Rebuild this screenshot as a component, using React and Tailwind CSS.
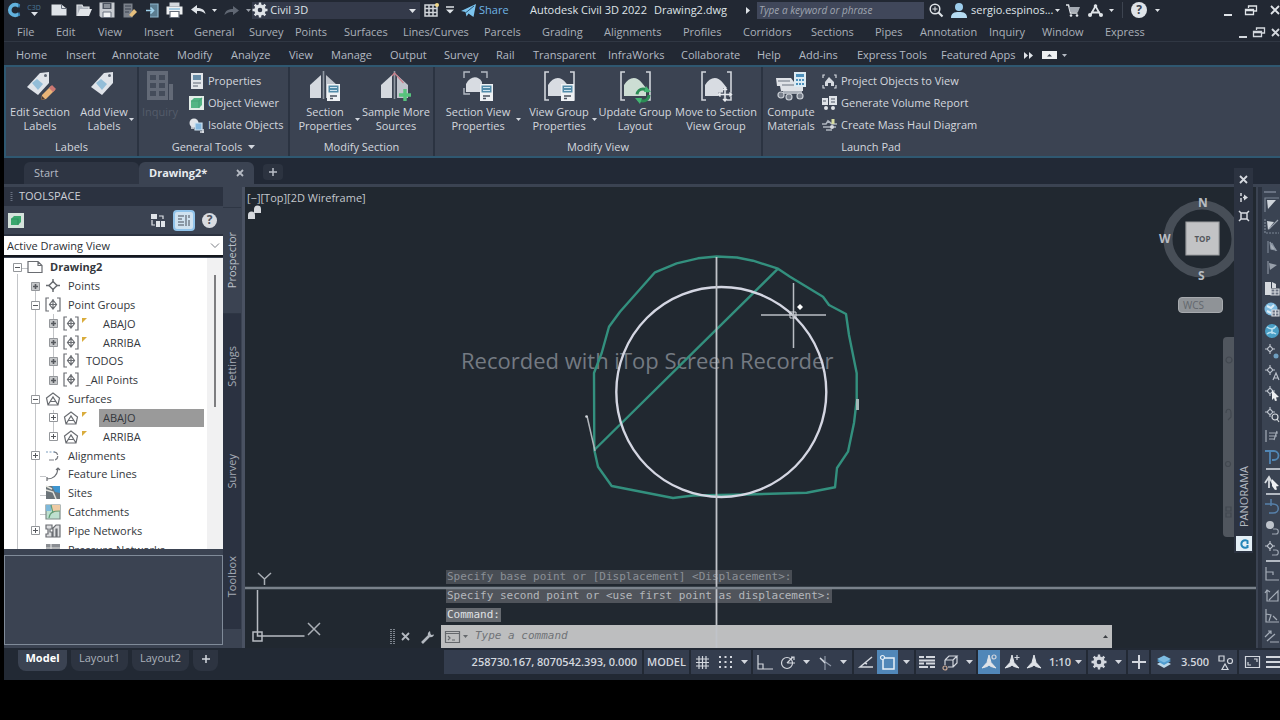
import React from 'react';

function Ic({ w = 16, h = 16, children, className = '' }) {
  return (
    <svg width={w} height={h} viewBox={`0 0 ${w} ${h}`} className={`block shrink-0 overflow-visible ${className}`} fill="none" stroke="currentColor" strokeWidth="1.2" aria-hidden="true">
      {children}
    </svg>
  );
}

const Caret = ({ className = '' }) => (
  <Ic w={7} h={4} className={className}><path d="M0 0h7L3.5 4z" fill="currentColor" stroke="none" /></Ic>
);

const SmallCaret = ({ className = '' }) => (
  <Ic w={5} h={3} className={className}><path d="M0 0h5L2.5 3z" fill="currentColor" stroke="none" /></Ic>
);

const Gear = () => (
  <Ic w={16} h={16}>
    <circle cx="8" cy="8" r="4" strokeWidth="3.4" />
    <path d="M8 0.5v3M8 12.5v3M0.5 8h3M12.5 8h3M2.7 2.7l2.1 2.1M11.2 11.2l2.1 2.1M2.7 13.3l2.1-2.1M11.2 4.8l2.1-2.1" strokeWidth="2.4" />
  </Ic>
);

const Restore = () => (
  <Ic w={12} h={11}><path d="M3.5 3V1h8v5H9M.5 4.5h8v5h-8zM.5 5.5h8" strokeWidth="1.3" /></Ic>
);

const Minimize = () => (
  <Ic w={8} h={11}><path d="M0 10h8" strokeWidth="2" /></Ic>
);

const Close = ({ s = 10 }) => (
  <Ic w={s} h={s}><path d={`M1 1L${s - 1} ${s - 1}M${s - 1} 1L1 ${s - 1}`} strokeWidth="1.8" /></Ic>
);

function TitleButton({ label, width, children }) {
  return (
    <button aria-label={label} className={`flex h-5 shrink-0 items-center justify-center ${width}`}>{children}</button>
  );
}

function TitleBar() {
  return (
    <header className="flex h-5 items-center text-[#dfe3e8]">
      <TitleButton label="Application menu" width="w-5">
        <Ic w={14} h={14}><path d="M12 3.200A5.400 5.400 0 1 0 12 10.800" stroke="#62b2de" strokeWidth="3.600" /><path d="M12 1v3.400M12 9.600V13" stroke="#2f79ad" strokeWidth="1.500" /></Ic>
      </TitleButton>
      <TitleButton label="Product" width="w-[20px]">
        <span className="flex flex-col items-center">
          <span className="text-[7px] leading-[8px] text-[#4a7897]">C3D</span>
          <Caret />
        </span>
      </TitleButton>
      <TitleButton label="New" width="w-[29px]">
        <Ic w={16} h={12}><path d="M.5.500h10l5 4v7h-15z" fill="#dfe3e8" stroke="none" /><path d="M10.500 .5v4h5" stroke="#68707e" strokeWidth="1" /></Ic>
      </TitleButton>
      <TitleButton label="Open" width="w-[22px]">
        <Ic w={16} h={13}><path d="M1 12V1h5l1 2h6v2" fill="#aeb4bd" stroke="#e2e5e9" /><path d="M1 12l3-7h12l-3 7z" fill="#e2e5e9" stroke="none" /></Ic>
      </TitleButton>
      <TitleButton label="Save" width="w-[23px]">
        <Ic w={16} h={16}><path d="M.5.500h15v15H2l-1.500-1.500z" fill="#c8ccd2" stroke="none" /><path d="M3.500 1h9v6h-9z" fill="#4d5461" stroke="none" /><path d="M4 10h8v5.500H4z" fill="#f0f2f4" stroke="#68707e" strokeWidth="1" /><path d="M5 3h6M5 5h6" stroke="#c8ccd2" strokeWidth="1" /></Ic>
      </TitleButton>
      <TitleButton label="Save as" width="w-[23px]">
        <Ic w={14} h={15}><path d="M.5.500h9v14h-9z" fill="#7b818b" stroke="none" /><path d="M2 3h6M2 6h6M2 9h4" stroke="#3b4250" /><path d="M6 12l5-6 3 3-5 5z" fill="#e5bf7e" stroke="none" /></Ic>
      </TitleButton>
      <TitleButton label="Export" width="w-[22px]">
        <Ic w={13} h={15}><path d="M4 1h8v13H4" fill="#5b7d91" stroke="#8eb6cd" /><path d="M0 7.500h7M4.500 4.500l3 3-3 3" stroke="#9fd2ec" strokeWidth="1.600" /></Ic>
      </TitleButton>
      <TitleButton label="Print" width="w-[23px]">
        <Ic w={17} h={16}><path d="M3.500 .5h10v4h-10z" fill="#d5d9de" stroke="none" /><path d="M.5 4.500h16v8H.5z" fill="#eef0f2" stroke="none" /><path d="M4 9.500h9v6H4z" fill="#fff" stroke="#646c79" /><path d="M3 7h11" stroke="#78b5d8" /></Ic>
      </TitleButton>
      <TitleButton label="Undo" width="w-[24px]">
        <Ic w={15} h={10}><path d="M0 4.500L6 0v3c4 0 8 1.500 8.500 6C12 6.500 9.500 6 6 6v3z" fill="currentColor" stroke="none" /></Ic>
      </TitleButton>
      <TitleButton label="Undo history" width="w-[9px]"><SmallCaret /></TitleButton>
      <TitleButton label="Redo" width="w-[25px]">
        <Ic w={15} h={9} className="text-[#606773]"><path d="M15 4.500L9 0v3C5 3 1 4.500.5 9 3 6.500 5.500 6 9 6v3z" fill="currentColor" stroke="none" /></Ic>
      </TitleButton>
      <TitleButton label="Redo history" width="w-[8px]"><SmallCaret className="text-[#9aa0aa]" /></TitleButton>
      <div className="relative flex h-[17px] w-[168px] shrink-0 items-center bg-[#343a4a]">
        <span className="flex w-[18px] items-center justify-center"><Gear /></span>
        <select aria-label="Workspace" className="h-[17px] w-full appearance-none bg-transparent pl-[2px] text-[11px] leading-[16px] text-[#dfe3e8] outline-none">
          <option>Civil 3D</option>
        </select>
        <Caret className="pointer-events-none absolute right-1 top-[7px]" />
      </div>
      <TitleButton label="Sheet set" width="w-[22px]">
        <Ic w={15} h={14}><path d="M1 2h12v11H1zM1 5.500h12M1 9.500h12M5 2v11M9 2v11" stroke="#cfd3d8" strokeWidth="1.500" /><circle cx="13" cy="2" r="2" fill="#efd789" stroke="none" /></Ic>
      </TitleButton>
      <TitleButton label="Customize toolbar" width="w-[16px]">
        <Ic w={8} h={8}><path d="M0 1h8" strokeWidth="1.500" /><path d="M0 3.500h8L4 7.500z" fill="currentColor" stroke="none" /></Ic>
      </TitleButton>
      <button className="flex h-5 w-[72px] shrink-0 items-center gap-[3px] pl-[3px] text-[11px] text-[#6fb4e6]">
        <Ic w={15} h={13}><path d="M0 7L15 0l-2.500 13-5-3.500-2 3-1-4.500z" fill="#7cc4ef" stroke="none" /><path d="M5 8.500L13 2" stroke="#2b5674" strokeWidth="1" /></Ic>
        Share
      </button>
      <h1 className="w-[124px] shrink-0 whitespace-nowrap text-[11px]">Autodesk Civil 3D 2022</h1>
      <span className="w-[92px] shrink-0 whitespace-nowrap text-[11px]">Drawing2.dwg</span>
      <Ic w={11} h={7}><path d="M0 0v7l4-3.500z" fill="currentColor" stroke="none" /></Ic>
      <input aria-label="Search help" placeholder="Type a keyword or phrase" className="h-[17px] w-[167px] min-w-0 bg-[#40475a] px-[2px] text-[10px] italic text-white outline-none placeholder:text-[#9fa5b0]" />
      <TitleButton label="Search" width="w-[24px]">
        <Ic w={14} h={14}><circle cx="6" cy="6" r="4.800" strokeWidth="1.500" /><path d="M9.500 9.500L13.500 13.500" strokeWidth="2.200" /><path d="M3.500 6h5M6 3.500v5" strokeWidth="1" /></Ic>
      </TitleButton>
      <TitleButton label="Account" width="w-[22px]">
        <Ic w={16} h={15}><circle cx="8" cy="4" r="4" fill="#9dcdec" stroke="none" /><path d="M0 15c0-5 3-6 8-6s8 1 8 6z" fill="#b6dbf1" stroke="none" /></Ic>
      </TitleButton>
      <button className="flex h-5 w-[91px] shrink-0 items-center gap-[2px] pl-[1px] text-[11px]">sergio.espinos...<SmallCaret /></button>
      <TitleButton label="Store" width="w-[24px]">
        <Ic w={14} h={13}><path d="M0 1h2.500l2 8h7" strokeWidth="1.500" /><path d="M3 3h11l-2 5H4.500z" fill="#a5abb4" stroke="none" /><circle cx="5" cy="11.500" r="1.300" fill="currentColor" stroke="none" /><circle cx="11" cy="11.500" r="1.300" fill="currentColor" stroke="none" /></Ic>
      </TitleButton>
      <TitleButton label="Autodesk apps" width="w-[20px]">
        <Ic w={15} h={13}><path d="M2.500 11L7.500 2l5 9M3 8.500h9" strokeWidth="1.800" /><circle cx="7.500" cy="2" r="1.800" fill="currentColor" stroke="none" /><circle cx="2" cy="11" r="2" fill="currentColor" stroke="none" /><circle cx="13" cy="11" r="2" fill="currentColor" stroke="none" /></Ic>
      </TitleButton>
      <SmallCaret className="mx-1" />
      <span className="mx-1 h-4 w-px bg-[#3d4450]" />
      <TitleButton label="Help" width="w-[24px]">
        <span className="flex size-4 items-center justify-center rounded-full bg-[#dfe3e8] text-[12px] font-bold leading-none text-[#3b4250]">?</span>
      </TitleButton>
      <SmallCaret className="ml-1" />
      <div className="ml-auto flex shrink-0 items-center gap-[13px]">
        <button aria-label="Minimize"><Minimize /></button>
        <button aria-label="Restore"><Restore /></button>
        <button aria-label="Close"><Close /></button>
      </div>
    </header>
  );
}

const MENUS = [
  ['File', 'w-[39px]'], ['Edit', 'w-[42px]'], ['View', 'w-[46px]'], ['Insert', 'w-[50px]'], ['General', 'w-[55px]'],
  ['Survey', 'w-[46px]'], ['Points', 'w-[49px]'], ['Surfaces', 'w-[59px]'], ['Lines/Curves', 'w-[81px]'], ['Parcels', 'w-[58px]'],
  ['Grading', 'w-[62px]'], ['Alignments', 'w-[79px]'], ['Profiles', 'w-[60px]'], ['Corridors', 'w-[68px]'], ['Sections', 'w-[64px]'],
  ['Pipes', 'w-[45px]'], ['Annotation', 'w-[69px]'], ['Inquiry', 'w-[53px]'], ['Window', 'w-[63px]'], ['Express', 'w-[50px]'],
];

function MenuBar() {
  return (
    <nav aria-label="Menu" className="flex h-[22px] items-center border-b border-[#303743] pl-[13px] pt-[3px] text-[11px] text-[#aab0b9]">
      {MENUS.map(([t, w]) => <button key={t} className={`shrink-0 whitespace-nowrap text-left ${w}`}>{t}</button>)}
      <div className="ml-auto flex shrink-0 items-center gap-[6px] text-[#d3d7dd]">
        <button aria-label="Minimize drawing"><Minimize /></button>
        <button aria-label="Restore drawing"><Restore /></button>
        <button aria-label="Close drawing"><Close s={9} /></button>
      </div>
    </nav>
  );
}

const TABS = [
  ['Home', 'w-[50px]'], ['Insert', 'w-[46px]'], ['Annotate', 'w-[65px]'], ['Modify', 'w-[54px]'], ['Analyze', 'w-[58px]'],
  ['View', 'w-[42px]'], ['Manage', 'w-[59px]'], ['Output', 'w-[54px]'], ['Survey', 'w-[52px]'], ['Rail', 'w-[37px]'],
  ['Transparent', 'w-[75px]'], ['InfraWorks', 'w-[73px]'], ['Collaborate', 'w-[76px]'], ['Help', 'w-[42px]'], ['Add-ins', 'w-[58px]'],
  ['Express Tools', 'w-[84px]'], ['Featured Apps', 'w-[83px]'],
];

function RibbonTabs() {
  return (
    <nav aria-label="Ribbon tabs" className="flex h-[23px] items-center pl-[12px] pt-[3px] text-[11px] text-[#b4bac3]">
      {TABS.map(([t, w]) => <button key={t} className={`shrink-0 whitespace-nowrap text-left ${w}`}>{t}</button>)}
      <button aria-label="More tabs"><Ic w={9} h={7}><path d="M0 0v7l4-3.500zM5 0v7l4-3.500z" fill="#dfe3e8" stroke="none" /></Ic></button>
      <button aria-label="Minimize ribbon" className="ml-[9px] flex items-center gap-[5px]">
        <Ic w={15} h={8}><path d="M0 0h15v8H0z" fill="#eef0f2" stroke="none" /><path d="M5 5.500h5L7.500 3z" fill="#3b4250" stroke="none" /></Ic>
        <SmallCaret />
      </button>
    </nav>
  );
}

const Tag = ({ pencil }) => (
  <Ic w={32} h={30}>
    <path d="M3 16L16 2l9-1v11L14 24z" fill="#dfe3e9" stroke="none" />
    <circle cx="21.500" cy="4.500" r="1.500" fill="#5c6472" stroke="none" />
    <path d="M8 12l5-4 6 5-5 6z" fill="#93bdd8" stroke="none" />
    {pencil && <g stroke="none"><path d="M17 29l1-5 9-9 4 4-9 9z" fill="#e9b477" /><path d="M25 17l3-3 4 4-3 3z" fill="#cb7773" /><path d="M17 29l1-4 3 3z" fill="#4b3a35" /></g>}
  </Ic>
);

const Badge = () => (
  <g stroke="none">
    <path d="M18 13h13v17H18z" fill="#eef1f4" /><path d="M19.500 14.500h10v7h-10z" fill="#528ba9" />
    <path d="M21 16.500h7M21 19.500h7" stroke="#cfe4f0" /><path d="M21 25h7M21 27.500h3" stroke="#49515e" strokeWidth="1.500" />
  </g>
);

const Mountain = ({ children, red }) => (
  <Ic w={32} h={30}>
    <path d="M1 27V14L12 4v23z" fill="#d5d9df" stroke="none" /><path d="M17 27V4l11 10v13z" fill="#bfc4cc" stroke="none" />
    <path d="M14.500 0v28" stroke="#9299a4" strokeWidth="1.600" />
    {red && <path d="M12 5l2.500-3 9 10" stroke="#c9808c" strokeWidth="1.300" />}
    {children}
  </Ic>
);

const ViewIcon = ({ children, corners, green }) => (
  <Ic w={32} h={30}>
    {corners
      ? <path d="M8 1H2v6M19 1h6v6M2 17v6h6" stroke="#b4bac3" strokeWidth="1.400" />
      : <path d="M6 1H2v28h4M27 1h4v28h-4" stroke="#d1d5db" strokeWidth="1.600" />}
    <path d={corners ? 'M4 21v-8c4-8 12-9 16-2v10z' : 'M5 25V14c5-8 12-10 18-2l4 5v8z'} fill={green ? '#ccddd3' : '#d8dce2'} stroke="none" />
    {children}
  </Ic>
);

const ICONS = {
  edit: <Tag pencil />,
  add: <Tag />,
  inquiry: <Ic w={28} h={32}><path d="M1 1h21v29H1z" fill="#636a77" stroke="none" /><path d="M4 5h6v5H4zM13 5h6v5h-6zM4 13h6v5H4zM13 13h6v5h-6zM4 21h6v5H4zM13 21h6v5h-6z" fill="#444c5a" stroke="none" /><path d="M23 14h4v16h-4z" fill="#636a77" stroke="none" /></Ic>,
  section: <Mountain><Badge /></Mountain>,
  sample: <Mountain red><path d="M25 18v12M19 24h12" stroke="#57c47c" strokeWidth="3.400" /></Mountain>,
  sview: <ViewIcon corners><Badge /></ViewIcon>,
  vgroup: <ViewIcon><Badge /></ViewIcon>,
  update: <ViewIcon green><circle cx="24" cy="24" r="6" stroke="#2b8c55" strokeWidth="3" strokeDasharray="15 4" /><path d="M27 15l5 6h-7zM21 33l-5-6h7z" fill="#43b673" stroke="none" /></ViewIcon>,
  move: <ViewIcon><path d="M25 17v13M18.500 23.500h13" stroke="#485160" strokeWidth="4" /><path d="M25 17v13M18.500 23.500h13M23 19l2-2 2 2M23 28l2 2 2-2M20.500 21.500l-2 2 2 2M29.500 21.500l2 2-2 2" stroke="#e8ebef" strokeWidth="1.500" /></ViewIcon>,
  compute: <Ic w={32} h={30}><path d="M1 7h15l3 4h9v9H6L5 15H2z" fill="#dfe2e7" stroke="none" /><path d="M3 10h12M7 14h14" stroke="#6b7280" /><path d="M8 20h19v3H8z" fill="#aab0b9" stroke="none" /><path d="M19 1h12v15H19z" fill="#dcebf4" stroke="none" /><path d="M21 3h8v3h-8zM21 8h2v2h-2zM24 8h2v2h-2zM27 8h2v2h-2zM21 12h2v2h-2zM24 12h2v2h-2zM27 12h2v2h-2z" fill="#4c90bc" stroke="none" /><circle cx="6" cy="24" r="3" fill="#777e8a" stroke="#c9ced5" /><circle cx="14" cy="26" r="3" fill="#777e8a" stroke="#c9ced5" /><circle cx="25" cy="25" r="3" fill="#777e8a" stroke="#c9ced5" /></Ic>,
};

function BigButton({ icon, lines, width, caret, disabled }) {
  return (
    <button disabled={disabled} className={`relative flex shrink-0 flex-col items-center whitespace-nowrap text-[11px] leading-[14px] ${disabled ? 'text-[#545c6a]' : ''} ${width}`}>
      <span className="mb-[3px] flex h-8 items-center">{ICONS[icon]}</span>
      {lines.map((l) => <span key={l}>{l}</span>)}
      {caret && <SmallCaret className="absolute right-0 top-[48px]" />}
    </button>
  );
}

function SmallButton({ icon, children }) {
  return (
    <button className="flex h-[22px] items-center gap-1 whitespace-nowrap text-[11px]">{icon}{children}</button>
  );
}

function Panel({ title, width, caret, children, last }) {
  return (
    <section className={`flex shrink-0 flex-col border-[#2b3341] ${last ? '' : 'border-r-2'} ${width}`}>
      <div className="flex h-[72px] pt-[3px]">{children}</div>
      <h2 className="flex items-center justify-center gap-[6px] text-[11px] leading-[18px]">{title}{caret && <Caret />}</h2>
    </section>
  );
}

function Ribbon() {
  return (
    <div className="flex h-[93px] border-y-2 border-l-2 border-[#2f5871] bg-[#3b4352] text-[#d3d7de]">
      <Panel title="Labels" width="w-[133px]">
        <BigButton icon="edit" lines={['Edit Section', 'Labels']} width="w-[68px]" />
        <BigButton icon="add" lines={['Add View', 'Labels']} width="w-[60px]" caret />
      </Panel>
      <Panel title="General Tools" width="w-[151px]" caret>
        <BigButton icon="inquiry" lines={['Inquiry']} width="w-[42px]" disabled />
        <div className="ml-2 flex flex-col">
          <SmallButton icon={<Ic w={15} h={16}><path d="M2 0h12v16H2z" fill="#e3e6ea" stroke="none" /><path d="M4 2h8v5H4z" fill="#688da8" stroke="none" /><path d="M4 10h8M4 13h5" stroke="#5c6472" /></Ic>}>Properties</SmallButton>
          <SmallButton icon={<Ic w={15} h={14}><path d="M0 0h15v14H0z" fill="#e2ece7" stroke="none" /><path d="M2 5l3-3h8v7l-3 3H2z" fill="#54b585" stroke="none" /><path d="M2 5h8v7M10 5l3-3" stroke="#46a578" /></Ic>}>Object Viewer</SmallButton>
          <SmallButton icon={<Ic w={15} h={15}><circle cx="5" cy="5" r="4.500" fill="#e0e4e9" stroke="none" /><path d="M6 5h7v7H6z" fill="#84b6dd" stroke="#cfe3f1" /><path d="M2 10h3M11 14h4M14 11v4" stroke="#e0e4e9" strokeWidth="1.500" /></Ic>}>Isolate Objects</SmallButton>
        </div>
      </Panel>
      <Panel title="Modify Section" width="w-[145px]">
        <BigButton icon="section" lines={['Section', 'Properties']} width="w-[70px]" caret />
        <BigButton icon="sample" lines={['Sample More', 'Sources']} width="w-[72px]" />
      </Panel>
      <Panel title="Modify View" width="w-[328px]">
        <BigButton icon="sview" lines={['Section View', 'Properties']} width="w-[86px]" caret />
        <BigButton icon="vgroup" lines={['View Group', 'Properties']} width="w-[76px]" caret />
        <BigButton icon="update" lines={['Update Group', 'Layout']} width="w-[76px]" />
        <BigButton icon="move" lines={['Move to Section', 'View Group']} width="w-[86px]" />
      </Panel>
      <Panel title="Launch Pad" width="w-[216px]" last>
        <BigButton icon="compute" lines={['Compute', 'Materials']} width="w-[56px]" />
        <div className="ml-[3px] flex flex-col">
          <SmallButton icon={<Ic w={15} h={15}><path d="M3 1H1v3M12 1h2v3M1 11v3h2M14 11v3h-2" /><path d="M3 12V8l4-5 5 5v4h-3V9H6v3z" fill="#d5d9df" stroke="none" /></Ic>}>Project Objects to View</SmallButton>
          <SmallButton icon={<Ic w={15} h={14}><path d="M0 2h6v7H0zM7 0h8v9H7z" fill="#dfe3e8" stroke="none" /><path d="M9 3h4M9 6h4M1 5h3" stroke="#4e5665" /><circle cx="4" cy="12" r="2" fill="#dfe3e8" stroke="none" /><circle cx="11" cy="12" r="2" fill="#dfe3e8" stroke="none" /></Ic>}>Generate Volume Report</SmallButton>
          <SmallButton icon={<Ic w={15} h={14}><path d="M0 6h4l2-3 4 3h5M1 9h13M4 12h6" stroke="#aeb5bf" strokeWidth="1.600" /><path d="M11 1v5" stroke="#d7dca2" strokeWidth="3" /><circle cx="10" cy="9" r="2" fill="#d5d9df" stroke="none" /></Ic>}>Create Mass Haul Diagram</SmallButton>
        </div>
      </Panel>
    </div>
  );
}

function FileTabs() {
  return (
    <div className="flex h-[26px] items-end bg-[#222936] pl-5 text-[11px]">
      <button className="h-[22px] w-[115px] rounded-t-md bg-[#2e3543] pl-[10px] text-left text-[#b5bac3]">Start</button>
      <div className="flex h-[22px] w-[115px] items-center rounded-t-md bg-[#3b4352] pl-[10px] text-[#e8ebef]">
        <button className="font-bold">Drawing2*</button>
        <button aria-label="Close tab" className="ml-auto mr-[10px] text-[#b5bac3]"><Close s={8} /></button>
      </div>
      <button aria-label="New tab" className="mb-1 ml-[9px] flex h-4 w-5 items-center justify-center rounded bg-[#2c3340] text-[#b9bec6]">
        <Ic w={8} h={8}><path d="M4 0v8M0 4h8" strokeWidth="1.500" /></Ic>
      </button>
    </div>
  );
}

const T = '#6a6d72';
const TREE_ICONS = {
  file: <Ic><path d="M1 2.500h10l4 4v7H1zM11 2.500v4h4" stroke={T} /></Ic>,
  point: <Ic><path d="M8 3.500L12 7.500 8 11.500 4 7.500z" stroke={T} strokeWidth="1.500" /><path d="M8 1v4M8 10v4M1 7.500h4M11 7.500h4" stroke={T} strokeWidth="1.500" /></Ic>,
  group: <Ic><path d="M4 1H1v13h3M12 1h3v13h-3" stroke={T} /><path d="M8 3l3.500 4.500L8 12 4.500 7.500zM8 2v11M4 7.500h8" stroke={T} /></Ic>,
  surface: <Ic><path d="M1.500 7L8 2l6.500 5-1.500 7H3zM3 14l5-8 5 8M5 10.500h6" stroke={T} /></Ic>,
  align: <Ic><path d="M1 4h9" stroke="#7f9fc0" strokeDasharray="2 1.500" /><path d="M9 4c5 0 5 8 0 8H4" stroke="#7a7d83" strokeDasharray="5 1" /></Ic>,
  feature: <Ic><path d="M2 13c6 0 10-3 11-10M11 4l2-2 2 2M2 11v4" stroke={T} /></Ic>,
  sites: <Ic><path d="M1 1h14v13H1z" fill="#6b7479" stroke="none" /><path d="M7 1h8v7l-5-1z" fill="#3e95cf" stroke="none" /><path d="M1 5l7 2 3 7M1 1l6 3" stroke="#e3e3dc" strokeWidth="1.500" /></Ic>,
  catch: <Ic><path d="M1 1h14v14H1z" fill="#bde0cf" stroke="#7d8a88" /><path d="M7 1h8v6l-8 2z" fill="#efcba4" stroke="none" /><path d="M1 1h5v6H1z" fill="#7db8da" stroke="none" /><path d="M4 14c1-6 4-7 11-7M6 1l2 8" stroke="#619d77" /></Ic>,
  pipe: <Ic><path d="M1 2h6v4H5v3h2v5H1v-3h2V6H1zM8 14V5l3-3h4v12h-3V6h-1v8z" stroke={T} fill="#dcdddf" /></Ic>,
  press: <Ic><path d="M1 2h14v13H1z" fill="#8b8e93" stroke="none" /><path d="M1 6h14M6 2v12" stroke="#ddd" /></Ic>,
};

const TREE = [
  { l: 0, t: 'Drawing2', i: 'file', e: '-', bold: true },
  { l: 1, t: 'Points', i: 'point', e: '#' },
  { l: 1, t: 'Point Groups', i: 'group', e: '-' },
  { l: 2, t: 'ABAJO', i: 'group', e: '#', flag: true },
  { l: 2, t: 'ARRIBA', i: 'group', e: '#', flag: true },
  { l: 2, t: 'TODOS', i: 'group', e: '#' },
  { l: 2, t: '_All Points', i: 'group', e: '#' },
  { l: 1, t: 'Surfaces', i: 'surface', e: '-' },
  { l: 2, t: 'ABAJO', i: 'surface', e: '+', flag: true, sel: true },
  { l: 2, t: 'ARRIBA', i: 'surface', e: '+', flag: true },
  { l: 1, t: 'Alignments', i: 'align', e: '+' },
  { l: 1, t: 'Feature Lines', i: 'feature' },
  { l: 1, t: 'Sites', i: 'sites' },
  { l: 1, t: 'Catchments', i: 'catch' },
  { l: 1, t: 'Pipe Networks', i: 'pipe', e: '+' },
  { l: 1, t: 'Pressure Networks', i: 'press' },
];

const INDENT = ['pl-[9px]', 'pl-[27px]', 'pl-[45px]'];

function Expander({ kind, label }) {
  return (
    <button aria-label={`Toggle ${label}`} className="shrink-0">
      <Ic w={9} h={9}>
        <path d="M.5.500h8v8h-8z" fill={kind === '#' ? '#c6c8ca' : '#fff'} stroke="#94979b" strokeWidth="1" />
        <path d={kind === '-' ? 'M2 4.500h5' : 'M2 4.500h5M4.500 2v5'} stroke="#55585d" strokeWidth={kind === '#' ? 1.6 : 1} />
      </Ic>
    </button>
  );
}

function Tree() {
  return (
    <div className="relative h-[291px] shrink-0 overflow-hidden bg-white text-[#34373c]">
      <Ic w={60} h={291} className="absolute left-0 top-0">
        <path d="M13.500 16V291M31.500 26V275M49.500 56V124M49.500 152V181M18 10.500h6M36 218.500h6M36 237.500h6M36 256.500h6" stroke="#c3c5c8" strokeWidth="1" />
      </Ic>
      <ul role="tree" aria-label="Prospector" className="relative grid h-[301px] auto-rows-fr text-[11px] leading-[18px]">
        {TREE.map((n, k) => (
          <li key={k} role="treeitem" aria-selected={!!n.sel} className={`flex min-h-0 items-center ${INDENT[n.l]}`}>
            {n.e ? <Expander kind={n.e} label={n.t} /> : <span className="w-[9px] shrink-0" />}
            <span className="ml-[5px] shrink-0">{TREE_ICONS[n.i]}</span>
            {n.flag && <Ic w={6} h={12} className="ml-[2px]"><path d="M1 0h5L4 2 1 5z" fill="#d9ac3c" stroke="none" /></Ic>}
            <span className={`${n.flag ? 'ml-3 pl-1' : 'ml-[7px]'} ${n.bold ? 'font-bold' : ''} ${n.sel ? 'w-[105px] bg-[#9a9a9a]' : ''} whitespace-nowrap`}>{n.t}</span>
          </li>
        ))}
      </ul>
      <div className="absolute bottom-0 right-0 top-0 w-4 bg-[#f1f1f2]"><div className="ml-[7px] mt-[17px] h-[132px] w-[2px] bg-[#7d7d80]" /></div>
    </div>
  );
}

function Toolspace() {
  return (
    <aside className="flex w-[241px] shrink-0 bg-[#3b4352]">
      <div className="flex w-[219px] flex-col pb-[3px]">
        <div className="flex h-[19px] shrink-0 items-center gap-[6px] bg-[#2b3240] pl-[6px] text-[11px] text-[#ccd0d7]">
          <Ic w={3} h={9}><path d="M1.500 0v9" stroke="#687080" strokeWidth="2" strokeDasharray="1 1" /></Ic>
          TOOLSPACE
        </div>
        <div className="flex h-7 shrink-0 items-center pl-1 pr-[6px]">
          <button aria-label="Preview"><Ic w={16} h={15}><path d="M0 0h16v15H0z" fill="#d5e3dc" stroke="none" /><path d="M3 6l3-3h7v6l-3 3H3z" fill="#3aa86e" stroke="none" /><path d="M3 6h7v6" stroke="#2f9662" /></Ic></button>
          <button aria-label="Toggle items" className="ml-auto text-[#dfe3e8]"><Ic w={14} h={13}><path d="M0 0h6v5H0zM5 7h4v6H5zM10 7h4v6h-4z" fill="currentColor" stroke="none" /><path d="M1 6v5h3M8 2h4v3" /></Ic></button>
          <button aria-label="Panorama display" className="ml-2 flex h-[21px] w-[22px] items-center justify-center rounded-sm border-2 border-[#90c3ea] bg-[#cfe2f0]"><Ic w={15} h={14}><path d="M1 3h6M1 6h4M1 9h6M1 12h6M9 2v11M12 2v3M12 7v6" stroke="#76808c" strokeWidth="1.500" /></Ic></button>
          <button aria-label="Help" className="ml-[7px] flex size-[15px] items-center justify-center rounded-full bg-[#d9dce1] text-[12px] font-bold leading-none text-[#4a515e]">?</button>
        </div>
        <div className="relative h-[23px] shrink-0 border-y-2 border-b-[#14171d] border-t-[#2b3240] bg-white">
          <select aria-label="View" className="block h-[19px] w-full appearance-none bg-white pl-[3px] text-[11px] leading-[18px] text-[#2c2f34] outline-none"><option>Active Drawing View</option></select>
          <Ic w={8} h={5} className="pointer-events-none absolute right-1 top-[7px]"><path d="M0 .5l4 4 4-4" stroke="#7c7f85" strokeWidth="1" /></Ic>
        </div>
        <div className="h-px shrink-0" />
        <Tree />
        <div className="mt-[6px] min-h-0 flex-1 border border-[#808b99]" />
      </div>
      <div className="flex w-[18px] flex-col pb-[19px] pt-5 text-[11px] text-[#a4aab5]">
        {['Prospector', 'Settings', 'Survey', 'Toolbox'].map((t, k) => (
          <button key={t} className={`flex flex-1 items-center justify-center ${k === 0 ? 'border-y border-[#2e3644] bg-[#3b4352] text-[#bcc1ca]' : 'bg-[#2b3241]'}`}>
            <span className="rotate-180 [writing-mode:vertical-rl]">{t}</span>
          </button>
        ))}
      </div>
      <div className="ml-px w-[3px] bg-[#4a5262]" />
    </aside>
  );
}

function Drawing() {
  return (
    <svg className="pointer-events-none absolute inset-0 size-full" fill="none" role="img" aria-label="Section drawing">
      <g transform="translate(-245 -187)">
        <path d="M716.500 256.500L737 257.500 753 260.700 778 268.700 790 276.700 823 296.700 829 305 846 314 849 335 856.700 373.300 856.700 400 854 423 848 451.700 837 468 835 487.300 806.700 492.700 746 494.500 693 495.500 673 498 611.700 486 598 466.700 594.300 450 594 373 601.700 353 609 326.700 620 311.700 655 272.300 676.700 263.300 698 258.300zM594.300 450L778 268.700" stroke="#33907e" strokeWidth="2.400" strokeLinejoin="round" />
        <circle cx="721.300" cy="392" r="105" stroke="#d4d6e2" strokeWidth="2.400" />
        <path d="M716.500 257v391" stroke="#c0c3c9" strokeWidth="1.800" />
        <path d="M245 588h1011" stroke="#7a828b" strokeWidth="2.400" />
        <path d="M587 416l8 35" stroke="#b0b5bb" strokeWidth="1.500" />
        <path d="M857.500 399v11" stroke="#a4b8b8" strokeWidth="3" />
        <circle cx="586.500" cy="416.500" r="1.300" fill="#d0d4d9" />
        <path d="M761 315h65M793.500 283v65" stroke="#b9bdc3" strokeWidth="1.500" />
        <path d="M790 312h6v6h-6z" stroke="#d0d3d8" />
        <path d="M800 304l3 3-3 3-3-3z" fill="#fff" />
        <path d="M257.500 590v46h47M253 632h9v9h-9z" stroke="#b7bbc1" strokeWidth="1.500" />
        <path d="M258 573l6.500 6 6.500-6M264.500 579v6M308 623l12 12M320 623l-12 12" stroke="#a9aeb5" strokeWidth="1.500" />
        <path d="M248 215a3.500 3.500 0 0 1 7 0v4h-7zM254 209a3.500 3.500 0 0 1 7 0v4h-7z" fill="#d5d8dc" />
      </g>
    </svg>
  );
}

function ViewCube() {
  return (
    <div className="absolute right-[11px] top-[9px] h-[120px] w-[88px] text-[12px] font-bold text-[#b8bcc2]">
      <Ic w={88} h={120} className="absolute inset-0">
        <circle cx="45" cy="43" r="34" stroke="#474e57" strokeWidth="9" />
        <path d="M29 26h33v33H29z" fill="#c2c3c5" stroke="#9b9da0" />
      </Ic>
      <span className="absolute left-[41px] top-0 leading-[14px]">N</span>
      <span className="absolute left-[41px] top-[73px] leading-[14px]">S</span>
      <span className="absolute left-[2px] top-[36px] leading-[14px]">W</span>
      <button className="absolute left-[29px] top-[26px] flex h-[33px] w-[33px] items-center justify-center text-[8px] text-[#54575c]">TOP</button>
      <button className="absolute left-[21px] top-[101px] h-4 w-[45px] rounded border border-[#a7aaae] bg-[#8f9397] pl-1 text-left text-[10px] font-normal leading-none text-[#62676d]">WCS</button>
    </div>
  );
}

function Panorama() {
  return (
    <div className="absolute -top-[19px] right-[3px] flex h-[385px] w-[19px] flex-col items-center bg-[#2c3341] pt-[7px] text-[#d6dae0]">
      <button aria-label="Close panorama"><Close s={9} /></button>
      <button aria-label="Auto-hide" className="mt-[9px]"><Ic w={8} h={9}><path d="M1 0v3M1 5v4M3 4.500h3" strokeWidth="1.500" /><path d="M4 1.500v6l4-3z" fill="currentColor" stroke="none" /></Ic></button>
      <button aria-label="Panorama properties" className="mt-[9px]"><Ic w={10} h={10}><path d="M2 2h6v6H2zM0 0l2 2M10 0L8 2M0 10l2-2M10 10L8 8" strokeWidth="1.500" /></Ic></button>
      <span className="mt-auto rotate-180 whitespace-nowrap text-[11px] leading-[14px] text-[#b2b7c0] [writing-mode:vertical-rl]">PANORAMA</span>
      <span className="mb-[2px] mt-[9px] flex h-[15px] w-4 items-center justify-center bg-[#e4eff6]">
        <Ic w={10} h={10}><path d="M9 2.500A3.800 3.800 0 1 0 9 7.500M8.500 2v3M8.500 6v3" stroke="#2585b8" strokeWidth="2" /></Ic>
      </span>
    </div>
  );
}

function CommandLine() {
  return (
    <div className="absolute bottom-0 left-[145px] right-[144px] font-['DejaVu_Sans_Mono',monospace] text-[11px]">
      <div className="flex flex-col items-start gap-[5px] pb-[3px] pl-[56px] leading-[14px]">
        <span className="bg-[#484d54] px-px text-[#8b9097]">Specify base point or [Displacement] &lt;Displacement&gt;:</span>
        <span className="bg-[#50545b] px-px text-[#b4b7bc]">Specify second point or &lt;use first point as displacement&gt;:</span>
        <span className="bg-[#666a70] px-px text-[#e0e2e5]">Command:</span>
      </div>
      <div className="flex h-[23px] items-center">
        <div className="flex w-[51px] shrink-0 items-center text-[#b3b8bf]">
          <Ic w={5} h={16}><path d="M1 0v16M4 0v16" strokeWidth="2" strokeDasharray="1 1" stroke="#7d848d" /></Ic>
          <button aria-label="Close command line" className="ml-[6px]"><Close s={9} /></button>
          <button aria-label="Customize" className="ml-[11px]"><Ic w={14} h={14}><path d="M1 13l7-7" strokeWidth="2.600" /><path d="M9 1c-2 1-3 3-1.500 5.500C10 8 12.500 7 13 4.500L10.500 5 9.500 4z" fill="currentColor" stroke="none" /></Ic></button>
        </div>
        <div className="flex h-full flex-1 items-center bg-[#bdbebf] pl-1 pr-1 text-[#65686c]">
          <Ic w={15} h={12}><path d="M.5.500h14v11H.5zM.5 2.500h14M3 5l2 2-2 2M7 9h3" /></Ic>
          <SmallCaret className="ml-[3px]" />
          <input aria-label="Command" placeholder="Type a command" className="ml-[7px] min-w-0 flex-1 bg-transparent italic text-[#333] outline-none placeholder:text-[#707377]" />
          <button aria-label="Command history"><Ic w={5} h={3}><path d="M0 3h5L2.500 0z" fill="#3d4045" stroke="none" /></Ic></button>
        </div>
      </div>
    </div>
  );
}

const node = <path d="M6 2l3 3-3 3-3-3zM6 0v3M6 7v3M1 5h3M8 5h3" stroke="#b9bfc9" />;
const SIDE = [
  ['Point', <><path d="M1 15V1h14" stroke="#7b8594" /><path d="M3 3h9L4 12z" fill="#cfd4da" stroke="none" /></>],
  ['Line', <><path d="M1 1v14h14" stroke="#7b8594" strokeDasharray="2 1" /><path d="M3 3l7 1-6 8z" fill="#cfd4da" stroke="none" /><path d="M5 11l9-9" stroke="#9aa2ae" /></>],
  ['Cursor', <><path d="M4 2v12M8 4l4 8" stroke="#7b8594" /><path d="M6 3l6 8-5-1z" fill="#aab1bb" stroke="#8f98a5" /></>],
  ['Flag', <><path d="M4 1v13" stroke="#8a93a0" /><path d="M5 3l8 2-7 5z" fill="#98a0ab" stroke="none" /></>],
  ['Table', <><path d="M1 1h6v13H1zM8 1l4 2v4H8z" fill="#d5d9de" stroke="none" /><path d="M7 8h8v6H7zM11 8v6M7 11h8" fill="#687080" stroke="#d5d9de" /></>],
  ['Globe table', <><circle cx="7" cy="7" r="6.500" fill="#7fbbe0" stroke="none" /><path d="M3 4l4 2 3-3M3 9l4 2" stroke="#dcedf7" strokeWidth="2" /><path d="M8 8h7v6H8zM8 11h7M11.500 8v6" fill="#687080" stroke="#d5d9de" /></>],
  ['Globe', <><circle cx="8" cy="8" r="7" fill="#4a9fc6" stroke="none" /><path d="M3 4c4 3 7 2 9-1M3 11c3-3 6-2 9 0M8 5v6" stroke="#b8e0f0" strokeWidth="1.500" /></>],
  ['Point add', <>{node}<circle cx="12" cy="12" r="2.500" fill="#6f9fc0" stroke="none" /></>],
  ['Point label', <>{node}<path d="M9 15l3-7 3 7M10 13h4" stroke="#b9bfc9" /></>],
  ['Point select', <>{node}<path d="M8 4l7 7-3 .5 1 3-2 .5-1-3-2 2z" fill="#eef0f2" stroke="none" /></>],
  ['Point zoom', <>{node}<circle cx="11" cy="10" r="3" /><path d="M13 12l2 3" /></>],
  ['Note', <><path d="M2 2v12M5 5h9M5 8h8M5 11h5M13 3l-3 9" stroke="#a5adb8" /></>],
  ['Parcel', <path d="M1 2h9a4 4 0 0 1 0 9H8M6 2v13" stroke="#5186b4" strokeWidth="1.800" />],
  null,
  ['Edit geometry', <><path d="M1 9l4-6 4 7M5 3v11" stroke="#d5d9de" strokeWidth="1.800" /><path d="M8 5l7 7-3 .5 1 3-2 .5-3-4z" fill="#eef0f2" stroke="none" /></>],
  null,
  ['Attach', <path d="M7 0v7M1 5h8c7 0 7 9 0 9H5" stroke="#5781aa" strokeWidth="1.500" />],
  ['Attach point', <><circle cx="6" cy="5" r="4" fill="#bfc4cc" stroke="none" /><path d="M9 9h3c3 0 3 5 0 5H8" stroke="#9da5b1" /></>],
  ['Attach node', <>{node}<path d="M9 9h3c3 0 3 5 0 5H8" stroke="#9da5b1" /></>],
  null,
  ['Angle', <path d="M2 1v13h13M2 6h7v3" stroke="#a5adb8" />],
  ['Bearing', <path d="M3 4v10h11V4L5 13M1 6l2-3 3 2" stroke="#a5adb8" />],
  ['Distance', <path d="M2 1v13h13M2 6l5 1-2 6M9 8l4 4" stroke="#a5adb8" />],
  ['Offset', <path d="M1 8l6-6M4 2h3v3M3 12L11 5M6 13h9" stroke="#a5adb8" />],
];

function SideToolbar() {
  return (
    <div aria-label="Drawing tools" role="toolbar" className="flex w-[18px] shrink-0 flex-col items-start overflow-hidden bg-[#3a4352] pt-1 text-[#d5d9de]">
      <span className="mb-[1px] ml-[2px] h-[2px] w-3 shrink-0 bg-[#687181]" />
      {SIDE.map((s, k) => s
        ? <button key={k} aria-label={s[0]} className="flex h-[21px] w-5 items-center justify-center"><Ic>{s[1]}</Ic></button>
        : <span key={k} className="flex h-1 w-full items-center"><span className="ml-1 h-[2px] w-full bg-[#b3b9c2]" /></span>)}
    </div>
  );
}

function Viewport() {
  return (
    <main className="relative flex min-w-0 flex-1 bg-[#212830]">
      <div className="relative min-w-0 flex-1">
        <p className="absolute left-[216px] top-[159px] whitespace-nowrap text-[22px] leading-7 text-[#747a82]">Recorded with iTop Screen Recorder</p>
        <p className="px-[2px] pt-[3px] text-[11px] leading-4 text-[#c3c7cd]">[−][Top][2D Wireframe]</p>
        <ViewCube />
        <div className="absolute right-[22px] top-[150px] flex h-[200px] w-[11px] flex-col items-center justify-around rounded-l bg-[#50565e] text-[#424850]">
          <Ic w={7} h={9}><circle cx="4" cy="4" r="3" /></Ic>
          <Ic w={7} h={20}><path d="M1 10c0-5 5-5 5 0v4l-3 3" /></Ic>
          <Ic w={7} h={8}><circle cx="3" cy="4" r="2.500" /></Ic>
          <Ic w={7} h={12}><path d="M1 1h5v4H1zM1 7h5v4H1z" /></Ic>
        </div>
        <CommandLine />
        <Drawing />
        <Panorama />
      </div>
      <div className="w-[6px] shrink-0 border-l-2 border-[#3b4352] bg-[#2b323f]" />
      <SideToolbar />
    </main>
  );
}

function Cell({ label, w, on, children }) {
  return (
    <button aria-label={label} className={`flex h-full shrink-0 items-center justify-center ${w} ${on ? 'bg-[#5187b8]' : ''}`}>{children}</button>
  );
}

function Group({ children }) {
  return <div className="flex h-6 shrink-0 items-center bg-[#343d4e]">{children}</div>;
}

const Compass = ({ extra }) => (
  <Ic w={16} h={16}><path d="M8 1l2 7.500L15 14l-5-1.500-2-1.500-2 1.500L1 14l5-5.500z" fill="#dfe3e8" stroke="#dfe3e8" strokeWidth="1" />{extra}</Ic>
);

function StatusBar() {
  return (
    <footer className="flex h-8 items-start bg-[#222934] pt-[2px] text-[11px] text-[#d3d7de]">
      <div className="flex h-[21px] shrink-0 pl-[14px] text-[#abb1bb]">
        <button className="mr-1 w-[49px] rounded-b-lg bg-[#3b4352] pb-1 font-bold text-white">Model</button>
        <button className="mr-1 w-[57px] rounded-b-lg bg-[#2d3441] pb-1">Layout1</button>
        <button className="mr-1 w-[57px] rounded-b-lg bg-[#2d3441] pb-1">Layout2</button>
        <button aria-label="New layout" className="flex w-[25px] items-center justify-center rounded-b-lg bg-[#2d3441] pb-1 text-[#d3d7de]"><Ic w={8} h={8}><path d="M4 0v8M0 4h8" strokeWidth="1.500" /></Ic></button>
      </div>
      <div className="ml-auto flex shrink-0 gap-[2px]">
        <Group><span className="w-[198px] whitespace-nowrap pr-[5px] text-right font-semibold">258730.167, 8070542.393, 0.000</span></Group>
        <Group><button className="w-[45px] font-semibold">MODEL</button></Group>
        <Group>
          <Cell label="Grid" w="w-[22px]"><Ic w={13} h={13}><path d="M3 0v13M6.500 0v13M10 0v13M0 3h13M0 6.500h13M0 10h13" /></Ic></Cell>
          <Cell label="Snap" w="w-6"><Ic w={13} h={12}><path d="M0 1h13M0 6h13M0 11h13" strokeWidth="2" strokeDasharray="2 3.500" /></Ic></Cell>
          <Cell label="Snap options" w="w-[14px]"><Caret /></Cell>
        </Group>
        <Group>
          <Cell label="Ortho" w="w-6"><Ic w={16} h={15}><path d="M1 0v14h15M1 9h5v5" /></Ic></Cell>
          <Cell label="Polar" w="w-5"><Ic w={15} h={15}><circle cx="7" cy="8" r="5.500" /><path d="M7 8h8M7 8l6-6M11 2h3v3" /></Ic></Cell>
          <Cell label="Polar options" w="w-[18px]"><Caret /></Cell>
          <Cell label="Isodraft" w="w-5"><Ic w={15} h={15}><path d="M7 1v14M2 3l11 8" stroke="#8e97a6" /><path d="M2 3l5 5" stroke="#d3d7de" /></Ic></Cell>
          <Cell label="Isodraft options" w="w-[17px]"><Caret /></Cell>
        </Group>
        <Group>
          <Cell label="Object tracking" w="w-[23px]"><Ic w={15} h={12}><path d="M14 1L2 11h13M7 7l2 1" strokeWidth="1.500" /></Ic></Cell>
          <Cell label="Object snap" w="w-[21px]" on><Ic w={15} h={15}><path d="M3 3h11v11H3z" strokeWidth="1.500" stroke="#e8f1f8" /><circle cx="2.500" cy="2.500" r="2" fill="#5187b8" stroke="#e8f1f8" /></Ic></Cell>
          <Cell label="Snap options" w="w-[16px]"><Caret /></Cell>
        </Group>
        <Group>
          <Cell label="Lineweight" w="w-[22px]"><Ic w={16} h={12}><path d="M0 1h5M7 1h9M0 4.500h16M0 7.500h5M7 7.500h9M0 11h9M11 11h5" strokeWidth="1.800" /></Ic></Cell>
          <Cell label="3D snap" w="w-[24px]"><Ic w={16} h={15}><path d="M3 5h8v7H6M3 5l4-4h8L11 5M15 1v7l-4 4M3 5v5" /><circle cx="3" cy="13" r="2" stroke="#c9a893" /></Ic></Cell>
          <Cell label="3D snap options" w="w-[14px]"><Caret /></Cell>
        </Group>
        <Group>
          <Cell label="Annotation visibility" w="w-[22px]" on><Compass extra={<circle cx="13" cy="3" r="2" />} /></Cell>
          <Cell label="Auto scale" w="w-[23px]"><Compass extra={<path d="M13 1v5M10.500 3.500h5" />} /></Cell>
          <Cell label="Annotation" w="w-[22px]"><Compass /></Cell>
          <button className="flex h-full w-[41px] items-center justify-center gap-1 font-semibold">1:10<Caret /></button>
        </Group>
        <Group>
          <Cell label="Workspace" w="w-[22px]"><Gear /></Cell>
          <Cell label="Workspace options" w="w-[16px]"><Caret /></Cell>
        </Group>
        <Group><Cell label="Annotation monitor" w="w-[21px]"><Ic w={14} h={14}><path d="M7 0v14M0 7h14" strokeWidth="2" /></Ic></Cell></Group>
        <Group>
          <Cell label="Surface" w="w-[26px]"><Ic w={14} h={14}><path d="M0 9l7 4 7-4-7-4z" fill="#bcd8e9" stroke="none" /><path d="M0 6l7 4 7-4-7-4z" fill="#509dd0" stroke="none" /><path d="M0 4l7 3.500L14 4 7 .5z" fill="#7dbce2" stroke="none" /></Ic></Cell>
          <button className="w-9 font-semibold">3.500</button>
          <Cell label="Objects" w="w-6"><Ic w={15} h={15}><path d="M1 1h5v5H1zM7 9l3 5.500H4z" /><circle cx="12" cy="6" r="2.500" /></Ic></Cell>
        </Group>
        <Group>
          <Cell label="Clean screen" w="w-[26px]"><Ic w={15} h={12}><path d="M.5.500h14v11H.5z" /><path d="M9 3h3v3M3 6v3h3" /></Ic></Cell>
          <Cell label="Customize status bar" w="w-[15px]"><Ic w={14} h={14}><path d="M0 2h14M0 7h14M0 12h14" strokeWidth="2" /></Ic></Cell>
        </Group>
      </div>
    </footer>
  );
}

export default function App() {
  return (
    <div className="flex h-screen min-h-[600px] flex-col overflow-hidden bg-black pb-10 pl-1 font-['Open_Sans','Noto_Sans',sans-serif]">
      <div className="flex min-h-0 flex-1 flex-col bg-[#222833]">
        <TitleBar />
        <MenuBar />
        <RibbonTabs />
        <Ribbon />
        <FileTabs />
        <div className="h-[3px] shrink-0 bg-[#3b4352]" />
        <div className="flex min-h-0 flex-1">
          <Toolspace />
          <Viewport />
        </div>
        <StatusBar />
      </div>
    </div>
  );
}
